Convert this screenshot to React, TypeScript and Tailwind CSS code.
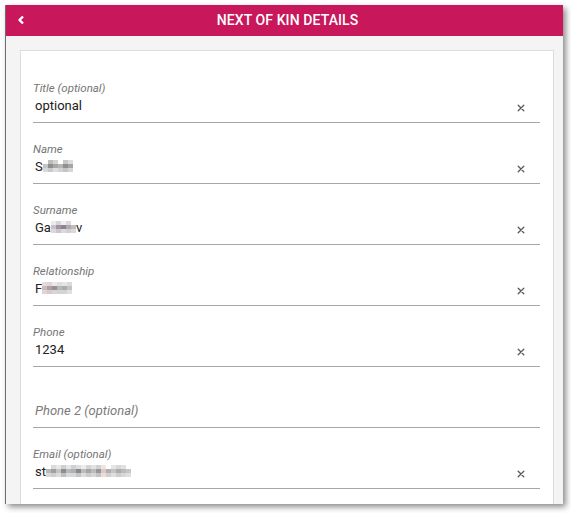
import { ReactNode } from "react";

type Cell = string;

// pixelated (redacted) part of a value
const Mosaic = ({ cols }: { cols: Cell[][] }) => (
  <span className="flex h-[12px] -translate-y-[1px]">
    {cols.map((col, i) => (
      <span key={i} className="flex w-[5px] flex-col">
        {col.map((c, j) => (
          <span key={j} className="block h-[4px] w-[5px]" style={{ backgroundColor: c }} />
        ))}
      </span>
    ))}
  </span>
);

const ClearIcon = () => (
  <svg width="8" height="8" viewBox="0 0 8 8" className="mt-[3px] shrink-0">
    <path d="M1.2 1.2 L6.8 6.8 M6.8 1.2 L1.2 6.8" stroke="#5a5a5a" strokeWidth="1.3" strokeLinecap="round" />
  </svg>
);

const Field = ({ label, value, placeholder }: { label?: string; value?: ReactNode; placeholder?: string }) => (
  <div className="h-[61px] border-b border-[#a6a6a6] pt-[19px]">
    <div className="h-[15px] text-[11.5px] italic leading-[14px] text-[#757575]">{label}</div>
    <div className="flex h-[20px] items-center justify-between pl-[2px] pr-[15px]">
      {placeholder ? (
        <span className="text-[13px] italic leading-[20px] text-[#7a7a7a]">{placeholder}</span>
      ) : (
        <>
          <span className="flex items-center text-[13px] leading-[20px] text-[#212121]">{value}</span>
          <ClearIcon />
        </>
      )}
    </div>
  </div>
);

const App = () => {
  return (
    <div className="h-[513px] w-[571px] overflow-hidden bg-white pl-[5px] pt-[5px] font-['Roboto','Liberation_Sans',sans-serif]">
      <div className="flex h-[499px] w-[558px] flex-col overflow-hidden border-l border-[#6f6f6f] bg-[#f4f4f4] shadow-[3px_3px_6px_rgba(0,0,0,0.45)]">
        {/* Header */}
        <div className="relative flex h-[31px] shrink-0 items-center justify-center bg-[#c8175a]">
          <svg width="8" height="10" viewBox="0 0 8 10" className="absolute left-[11px] top-[10px]">
            <polyline points="6,1.5 2.5,5 6,8.5" fill="none" stroke="white" strokeWidth="2.4" strokeLinejoin="round" />
          </svg>
          <span className="pl-[6px] text-[14px] font-medium tracking-[0.1px] text-white">NEXT OF KIN DETAILS</span>
        </div>

        {/* Body */}
        <div className="flex-1 pl-[14px] pr-[9px] pt-[14px]">
          <div className="h-[480px] border border-[#dcdcdc] bg-white pl-[12px] pr-[13px] pt-[11px]">
            <Field label="Title (optional)" value="optional" />
            <Field
              label="Name"
              value={
                <>
                  <span>S</span>
                  <Mosaic
                    cols={[
                      ["#ffffff", "#c4c4c4", "#d8d8d8"],
                      ["#bdbdbd", "#8f8f8f", "#c9c9c9"],
                      ["#d8d2ca", "#a8a8a8", "#dedede"],
                      ["#ffffff", "#b5b5b5", "#d2d2d2"],
                      ["#c6c6c6", "#909090", "#c4c4c4"],
                      ["#dcdcdc", "#a5a5a5", "#d6d6d6"],
                    ]}
                  />
                </>
              }
            />
            <Field
              label="Surname"
              value={
                <>
                  <span>Ga</span>
                  <Mosaic
                    cols={[
                      ["#efeaf0", "#c9c1ca", "#dcd6dd"],
                      ["#d9d3da", "#9e959f", "#ccc5cd"],
                      ["#f3f0f3", "#8c848d", "#ddd8de"],
                      ["#dcd8dd", "#b0a9b1", "#d2ced3"],
                      ["#ffffff", "#bdbdbd", "#dadada"],
                    ]}
                  />
                  <span>v</span>
                </>
              }
            />
            <Field
              label="Relationship"
              value={
                <>
                  <span>F</span>
                  <Mosaic
                    cols={[
                      ["#e6dcdc", "#cdb9b9", "#ddd4d4"],
                      ["#ddd6d9", "#aea0a8", "#d2cbcf"],
                      ["#ebe7e9", "#978f94", "#d8d3d6"],
                      ["#dedede", "#b6b6b6", "#d3d3d3"],
                      ["#e6e6e6", "#a8adb2", "#d2d5d8"],
                      ["#dadada", "#c2c2c2", "#e0e0e0"],
                    ]}
                  />
                </>
              }
            />
            <Field label="Phone" value="1234" />
            <Field placeholder="Phone 2 (optional)" />
            <Field
              label="Email (optional)"
              value={
                <>
                  <span>st</span>
                  <Mosaic
                    cols={[
                      ["#ffffff", "#b9b9b9", "#d8d8d8"],
                      ["#dadada", "#a0a0a0", "#cfcfcf"],
                      ["#e8e8e8", "#c4c4c4", "#dcdcdc"],
                      ["#cfcfcf", "#8e8e8e", "#c0c0c0"],
                      ["#e6e6e6", "#b9b9b9", "#d9d9d9"],
                      ["#cfd2d5", "#adb1b5", "#d6d9dc"],
                      ["#dedede", "#8a8a8a", "#c6c6c6"],
                      ["#ececec", "#bcbcbc", "#dcdcdc"],
                      ["#d4d4d4", "#a6a6a6", "#cbcbcb"],
                      ["#e2e2e2", "#bdbdbd", "#d6d6d6"],
                      ["#d2d2d2", "#989898", "#c4c4c4"],
                      ["#efe4e4", "#dcc8c8", "#e8dcdc"],
                      ["#ffffff", "#b0b0b0", "#d0d0d0"],
                      ["#e4e4e4", "#c4c4c4", "#dedede"],
                      ["#d8d8d8", "#ababab", "#cdcdcd"],
                      ["#e0e0e0", "#bbbbbb", "#d7d7d7"],
                      ["#ffffff", "#c6c6c6", "#dfdfdf"],
                    ]}
                  />
                </>
              }
            />
          </div>
        </div>
      </div>
    </div>
  );
};

export default App;
